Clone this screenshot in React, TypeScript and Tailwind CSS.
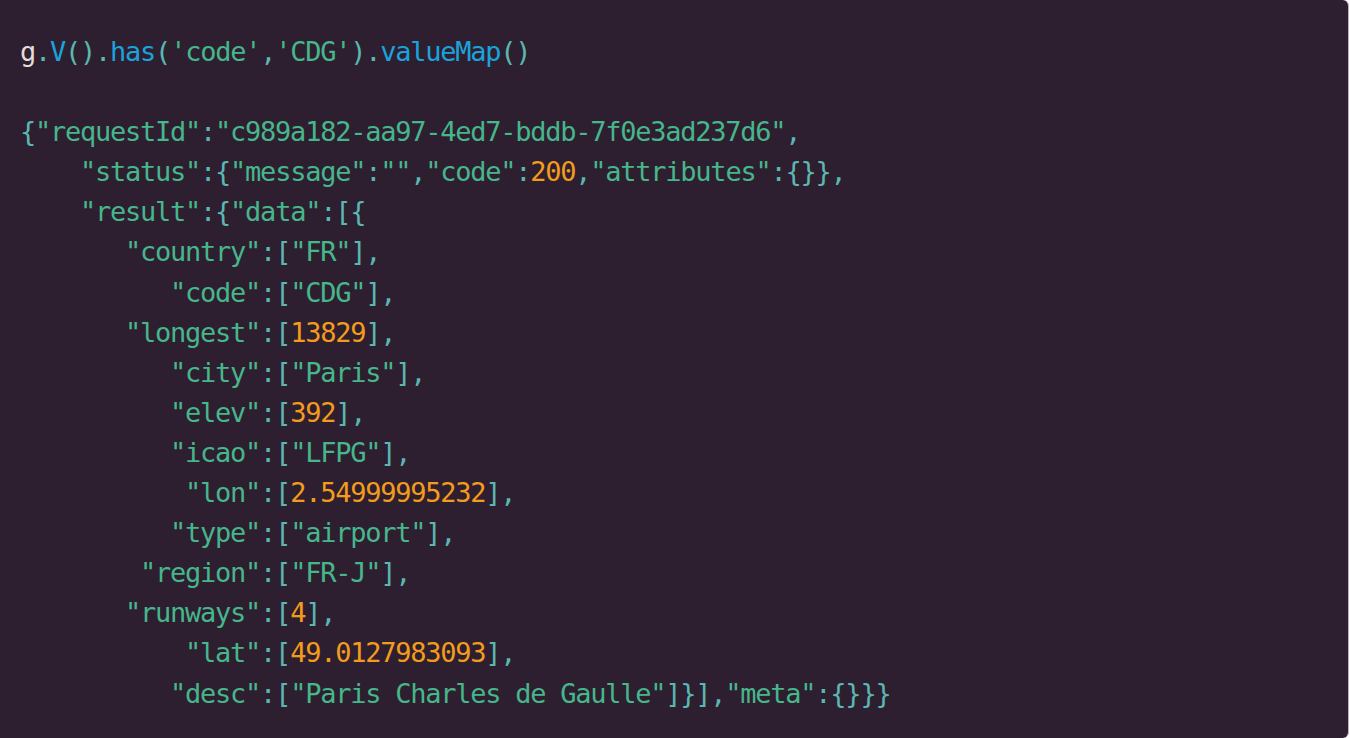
import React from 'react';

type Tok = [string, string];

const P = 'text-[#5ab7b1]';
const S = 'text-[#46b68b]';
const N = 'text-[#f39c1c]';
const F = 'text-[#1aa3db]';
const G = 'text-[#e2ddd6]';

// one line of json: indent, key, then the rest as tokens
const row = (indent: number, key: string, rest: Tok[]): Tok[] => [
  [' '.repeat(indent), P],
  [`"${key}"`, S],
  [':', P],
  ...rest,
];

const arr = (v: string, kind: string, tail = ','): Tok[] => [
  ['[', P],
  [v, kind],
  [']' + tail, P],
];

const lines: Tok[][] = [
  [
    ['g', G],
    ['.', P],
    ['V', F],
    ['().', P],
    ['has', F],
    ['(', P],
    ["'code'", S],
    [',', P],
    ["'CDG'", S],
    [').', P],
    ['valueMap', F],
    ['()', P],
  ],
  [[' ', P]],
  [
    ['{', P],
    ['"requestId"', S],
    [':', P],
    ['"c989a182-aa97-4ed7-bddb-7f0e3ad237d6"', S],
    [',', P],
  ],
  row(4, 'status', [
    ['{', P],
    ['"message"', S],
    [':', P],
    ['""', S],
    [',', P],
    ['"code"', S],
    [':', P],
    ['200', N],
    [',', P],
    ['"attributes"', S],
    [':{}},', P],
  ]),
  row(4, 'result', [
    ['{', P],
    ['"data"', S],
    [':[{', P],
  ]),
  row(7, 'country', arr('"FR"', S)),
  row(10, 'code', arr('"CDG"', S)),
  row(7, 'longest', arr('13829', N)),
  row(10, 'city', arr('"Paris"', S)),
  row(10, 'elev', arr('392', N)),
  row(10, 'icao', arr('"LFPG"', S)),
  row(11, 'lon', arr('2.54999995232', N)),
  row(10, 'type', arr('"airport"', S)),
  row(8, 'region', arr('"FR-J"', S)),
  row(7, 'runways', arr('4', N)),
  row(11, 'lat', arr('49.0127983093', N)),
  row(10, 'desc', [
    ['[', P],
    ['"Paris Charles de Gaulle"', S],
    [']}],', P],
    ['"meta"', S],
    [':{}}}', P],
  ]),
];

const App: React.FC = () => {
  return (
    <div className="h-[738px] w-[1350px] bg-white overflow-hidden">
      <div className="h-[738px] w-[1349px] bg-[#2e1f30] rounded-r-md border-r border-[#b8b4b8] pt-[32px] pl-[20px]">
        <pre className="font-['DejaVu_Sans_Mono',monospace] text-[27px] leading-[40.1px] tracking-[-1.25px]">
          {lines.map((l, i) => (
            <div key={i}>
              {l.map(([t, c], j) => (
                <span key={j} className={c}>
                  {t}
                </span>
              ))}
            </div>
          ))}
        </pre>
      </div>
    </div>
  );
};

export default App;
